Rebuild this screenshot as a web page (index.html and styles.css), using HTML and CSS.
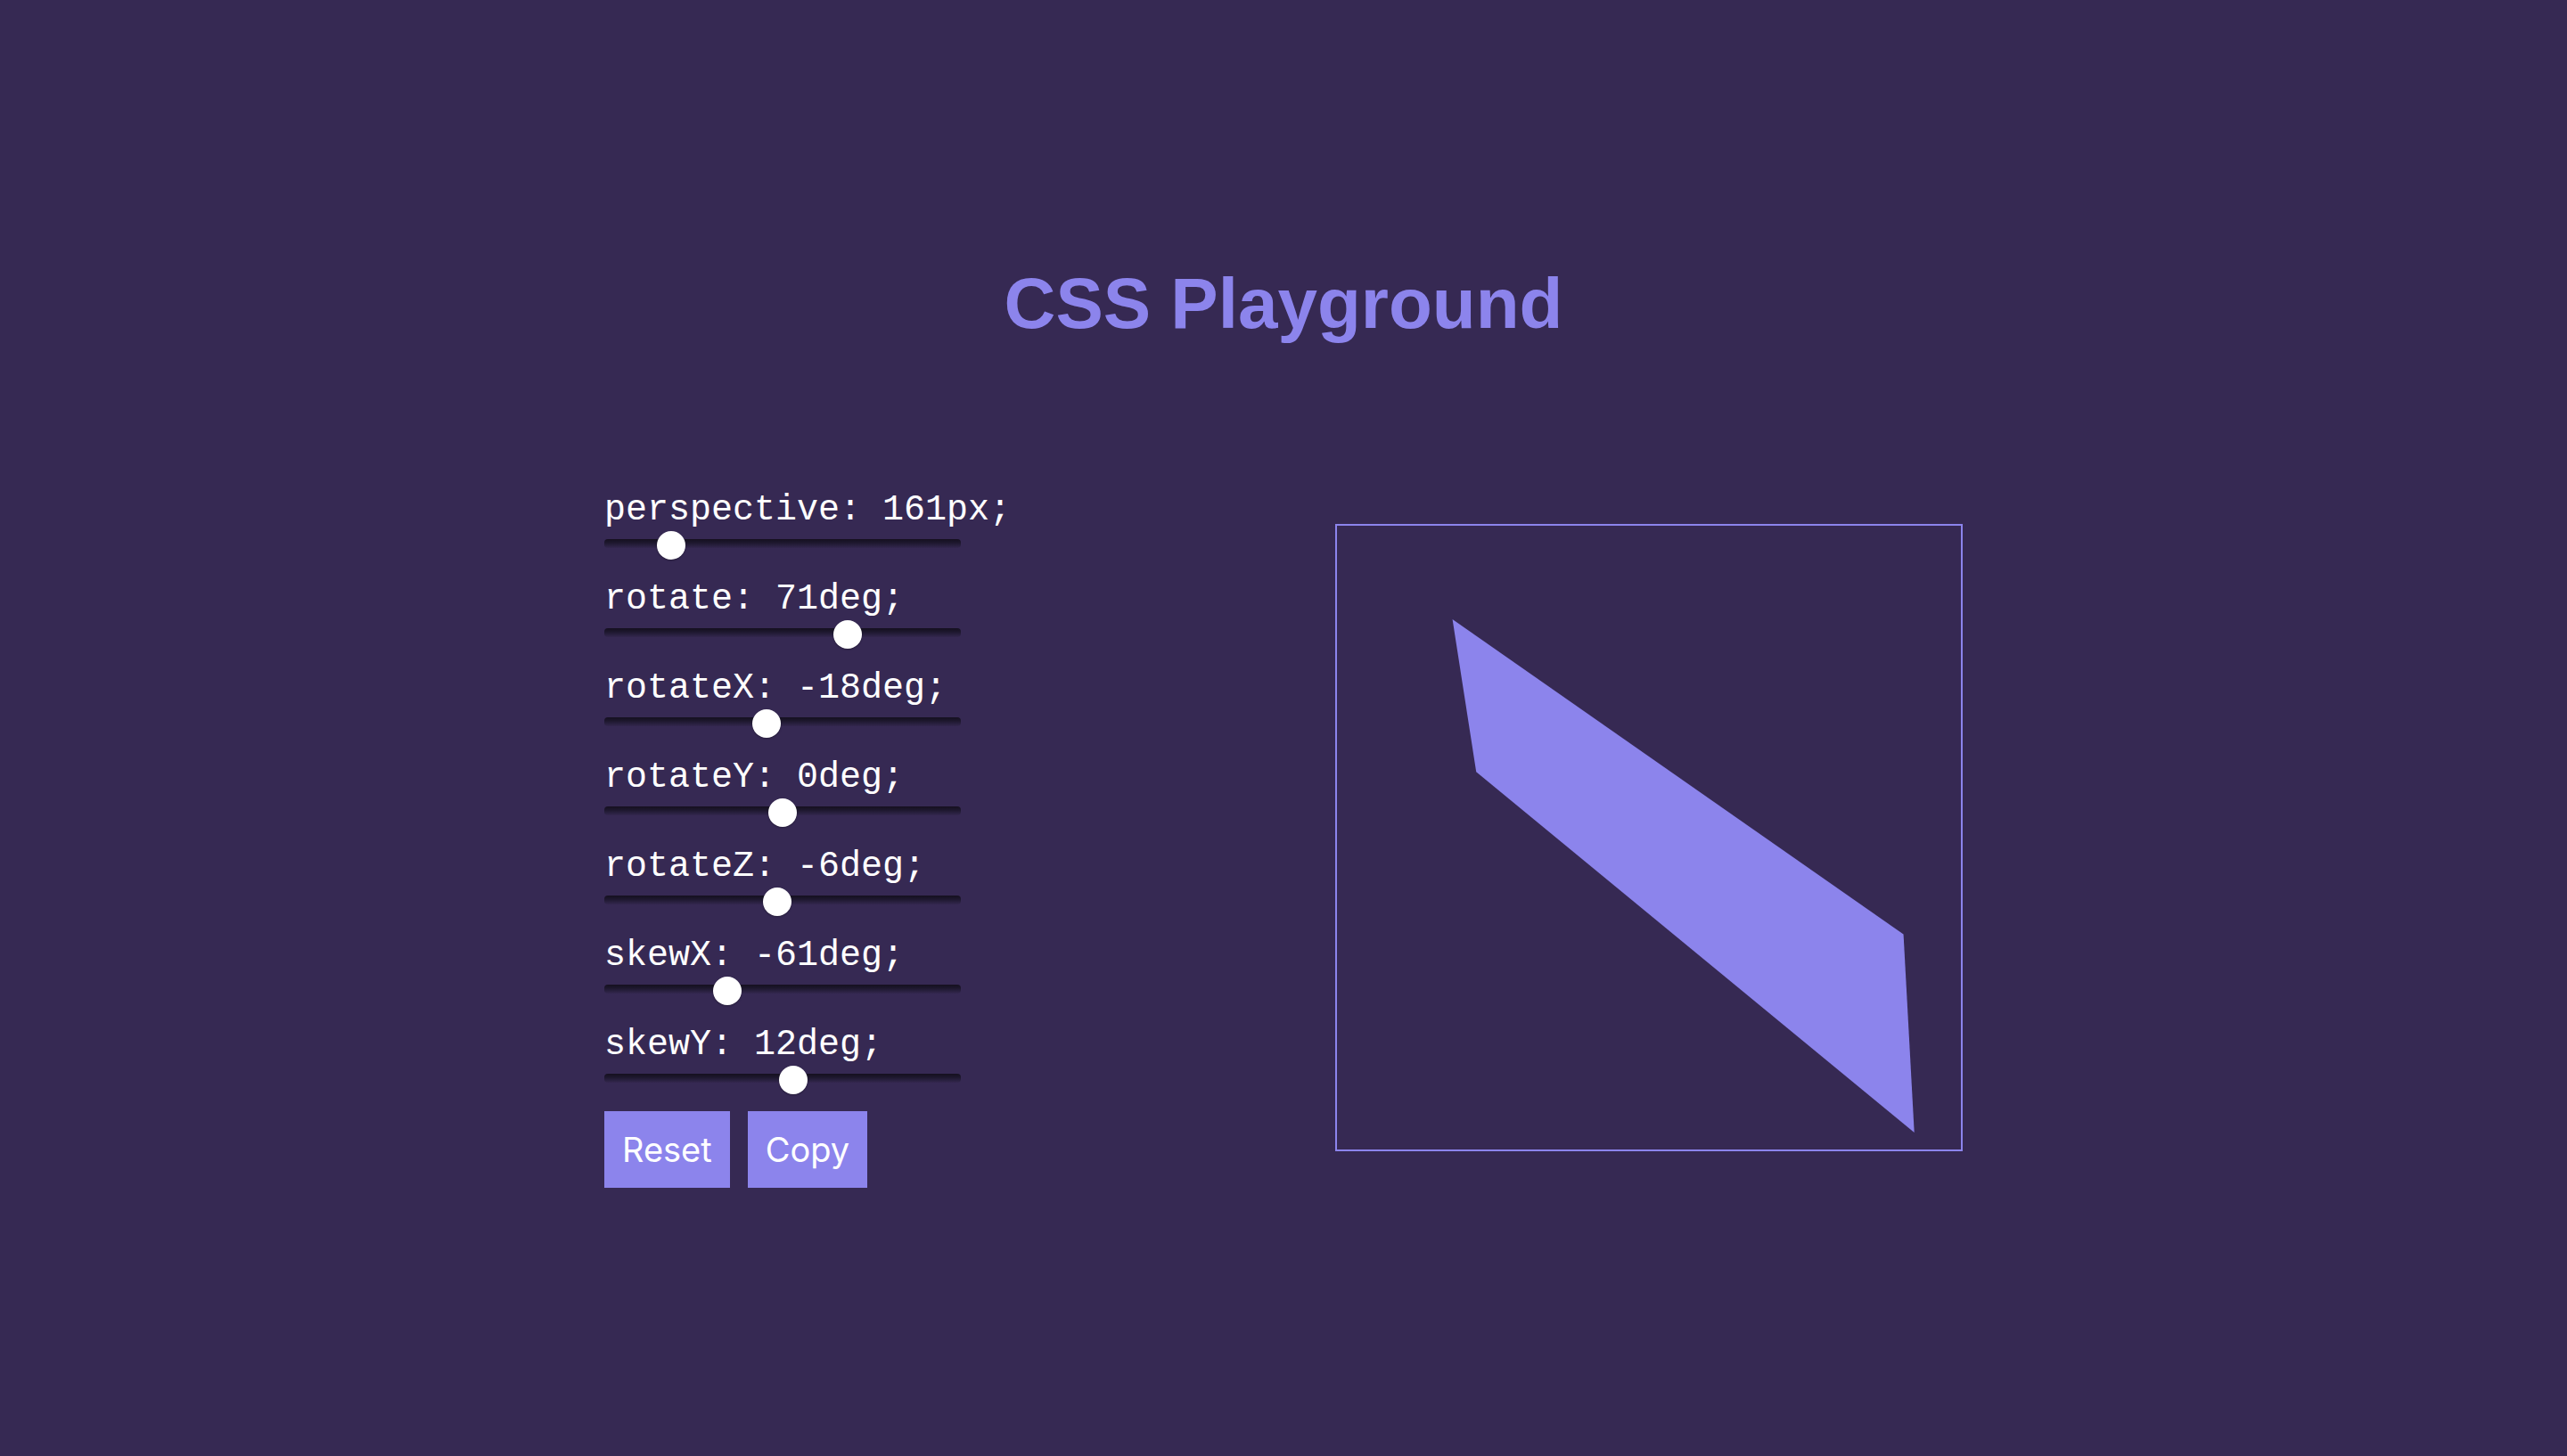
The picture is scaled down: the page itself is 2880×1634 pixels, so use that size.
FILE: index.html
```html
<!DOCTYPE html>
<html lang="en">
<head>
<meta charset="utf-8">
<title>CSS Playground</title>
<link rel="stylesheet" href="styles.css">
</head>
<body>
<h1 class="title">CSS Playground</h1>
<main class="playground">
  <form class="controls">
    <div class="control">
      <label for="perspective">perspective: 161px;</label>
      <input class="slider" id="perspective" type="range" min="0" max="999" value="161">
    </div>
    <div class="control">
      <label for="rotate">rotate: 71deg;</label>
      <input class="slider" id="rotate" type="range" min="-180" max="180" value="71">
    </div>
    <div class="control">
      <label for="rotate-x">rotateX: -18deg;</label>
      <input class="slider" id="rotate-x" type="range" min="-180" max="180" value="-18">
    </div>
    <div class="control">
      <label for="rotate-y">rotateY: 0deg;</label>
      <input class="slider" id="rotate-y" type="range" min="-180" max="180" value="0">
    </div>
    <div class="control">
      <label for="rotate-z">rotateZ: -6deg;</label>
      <input class="slider" id="rotate-z" type="range" min="-180" max="180" value="-6">
    </div>
    <div class="control">
      <label for="skew-x">skewX: -61deg;</label>
      <input class="slider" id="skew-x" type="range" min="-180" max="180" value="-61">
    </div>
    <div class="control">
      <label for="skew-y">skewY: 12deg;</label>
      <input class="slider" id="skew-y" type="range" min="-180" max="180" value="12">
    </div>
    <div class="actions">
      <button class="button" type="reset">Reset</button>
      <button class="button" type="button">Copy</button>
    </div>
  </form>
  <div class="stage">
    <div class="shape"></div>
  </div>
</main>
</body>
</html>
```

FILE: styles.css
```css
:root {
  --background: #362953;
  --accent: #8c84ec;
}

* {
  box-sizing: border-box;
}

body {
  display: flex;
  flex-direction: column;
  justify-content: center;
  align-items: center;
  gap: 160px;
  min-height: 100vh;
  margin: 0;
  padding: 0 20px 6px;
  background: var(--background);
  color: #fff;
}

.title {
  margin: 0;
  color: var(--accent);
  font: bold 80px/92px "Liberation Sans", Arial, sans-serif;
}

.playground {
  display: flex;
  flex-wrap: wrap;
  justify-content: space-between;
  align-items: center;
  gap: 40px;
  width: 100%;
  max-width: 1524px;
}

.controls {
  display: flex;
  flex-direction: column;
  gap: 26px;
  width: 400px;
}

.control {
  display: flex;
  flex-direction: column;
  font: 40px/52px "Liberation Mono", "Courier New", monospace;
  white-space: nowrap;
}

.slider {
  appearance: none;
  width: 100%;
  height: 22px;
  margin: 0;
  background: transparent;
}

.slider::-webkit-slider-runnable-track {
  height: 10px;
  border-radius: 4px;
  background: linear-gradient(#15101f, #1d172d 40%, #33274e);
}

.slider::-webkit-slider-thumb {
  appearance: none;
  width: 32px;
  height: 32px;
  margin-top: -9px;
  border-radius: 50%;
  background: #fff;
  box-shadow: 0 1px 2px rgba(0, 0, 0, 0.3);
}

.actions {
  display: flex;
  gap: 20px;
}

.button {
  padding: 20px;
  border: 0;
  background: var(--accent);
  color: #fff;
  font: 38px/46px Inter, sans-serif;
}

.stage {
  display: grid;
  place-items: center;
  width: 704px;
  aspect-ratio: 1;
  border: 2px solid var(--accent);
}

.shape {
  width: 300px;
  height: 300px;
  background: var(--accent);
  transform: perspective(322px) rotate(71deg) rotateX(-18deg) rotateY(0deg) rotateZ(-6deg) skewX(-61deg) skewY(12deg);
}
```
